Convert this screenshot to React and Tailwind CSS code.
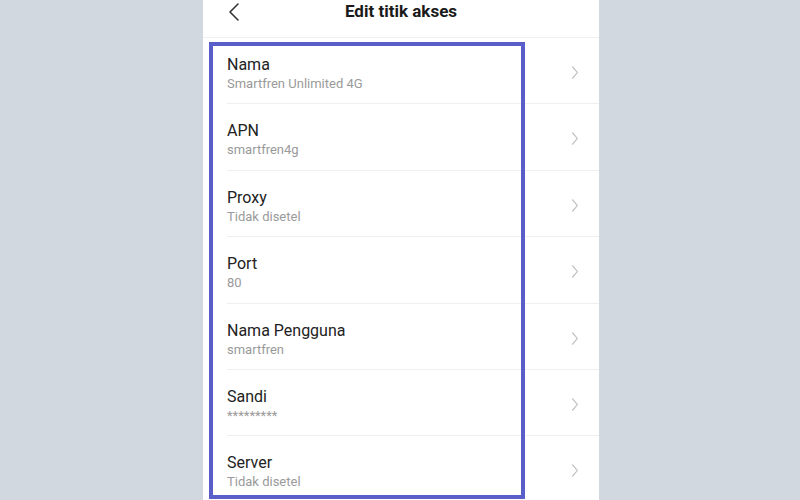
import React from 'react';

const rows = [
  { title: 'Nama', value: 'Smartfren Unlimited 4G' },
  { title: 'APN', value: 'smartfren4g' },
  { title: 'Proxy', value: 'Tidak disetel' },
  { title: 'Port', value: '80' },
  { title: 'Nama Pengguna', value: 'smartfren' },
  { title: 'Sandi', value: '*********' },
  { title: 'Server', value: 'Tidak disetel' },
];

function Chevron({ className }) {
  return (
    <svg viewBox="0 0 10 18" className={className} fill="none" stroke="currentColor" strokeWidth="1.4" strokeLinecap="round" strokeLinejoin="round">
      <path d="M2 2l6 7-6 7" />
    </svg>
  );
}

export default function App() {
  return (
    <div className="w-[800px] h-[500px] overflow-hidden bg-[#d2d8df] flex justify-center font-['Roboto',sans-serif]">
      <div className="w-[396px] h-full bg-white ml-[2px] relative">
        {/* header */}
        <div className="h-[38px] relative flex items-center justify-center border-b border-[#f0f0f0]">
          <svg viewBox="0 0 12 20" className="absolute left-[25px] top-[2px] w-[12px] h-[20px] text-[#333]" fill="none" stroke="currentColor" strokeWidth="1.6" strokeLinecap="round" strokeLinejoin="round">
            <path d="M10 2L2 10l8 8" />
          </svg>
          <h1 className="text-[17px] font-bold text-[#1a1a1a] -mt-[14px]">Edit titik akses</h1>
        </div>

        {rows.map((r, i) => (
          <div key={r.title} className="pl-[24px]">
            <div className={`h-[66.4px] flex items-start pr-[20px] ${i < rows.length - 1 ? 'border-b border-[#efefef]' : ''}`}>
              <div className="flex-1 pt-[17px]">
                <div className="text-[16px] leading-[20px] text-[#222]">{r.title}</div>
                <div className="text-[13px] leading-[16px] mt-[1px] text-[#9a9a9a]">{r.value}</div>
              </div>
              <Chevron className="w-[8px] h-[15px] mt-[27px] text-[#b8b8b8]" />
            </div>
          </div>
        ))}

        {/* highlight box */}
        <div className="absolute left-[6px] top-[42px] w-[316px] h-[457px] border-[4px] border-[#5a5ec8]" />
      </div>
    </div>
  );
}
